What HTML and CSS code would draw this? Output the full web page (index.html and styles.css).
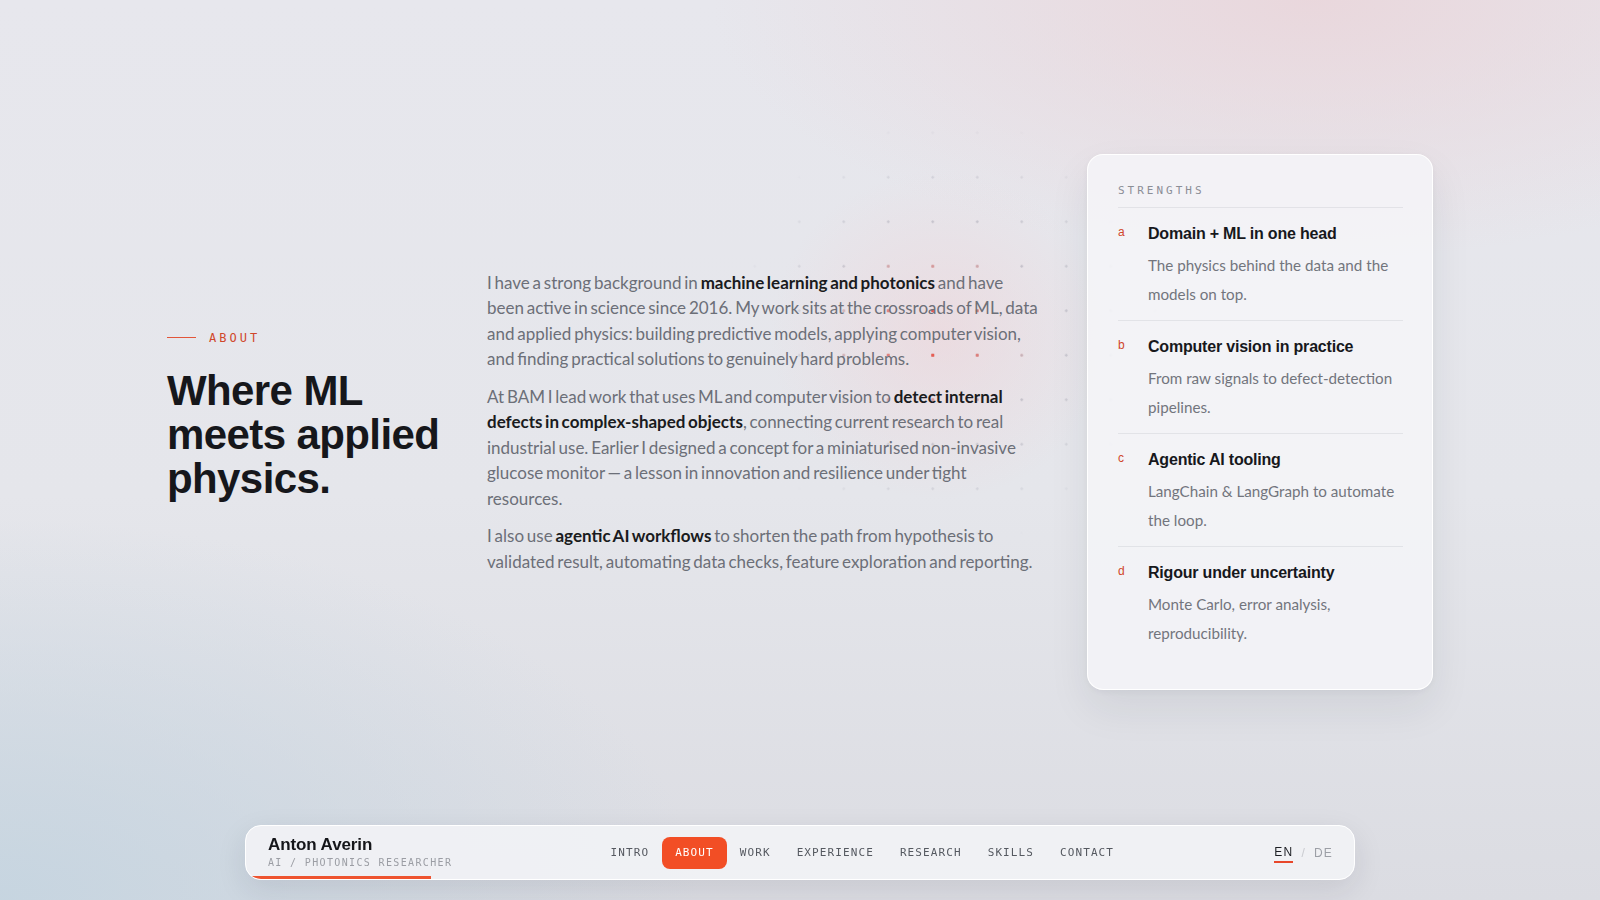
FILE: index.html
```html
<!DOCTYPE html>
<html lang="en">

<head>
    <meta charset="UTF-8">
    <meta name="viewport" content="width=device-width, initial-scale=1.0">
    <title>Anton Averin — About</title>

    <link rel="stylesheet" href="styles.css">
</head>

<body>
    <div class="glow"></div>
    <div class="dots"></div>

    <main class="about">
        <div class="about-grid">
            <div class="about-head">
                <p class="eyebrow"><span class="eyebrow-line"></span>ABOUT</p>
                <h1 class="title">Where ML meets applied physics.</h1>
            </div>

            <div class="about-text">
                <p>I have a strong background in <b>machine learning and photonics</b> and have been active in science since 2016. My work sits at the crossroads of ML, data and applied physics: building predictive models, applying computer vision, and finding practical solutions to genuinely hard problems.</p>
                <p>At BAM I lead work that uses ML and computer vision to <b>detect internal defects in complex-shaped objects</b>, connecting current research to real industrial use. Earlier I designed a concept for a miniaturised non-invasive glucose monitor — a lesson in innovation and resilience under tight resources.</p>
                <p>I also use <b>agentic AI workflows</b> to shorten the path from hypothesis to validated result, automating data checks, feature exploration and reporting.</p>
            </div>

            <aside class="card">
                <p class="card-label">STRENGTHS</p>
                <div class="item">
                    <span class="item-key">a</span>
                    <div>
                        <h3 class="item-title">Domain + ML in one head</h3>
                        <p class="item-desc">The physics behind the data and the models on top.</p>
                    </div>
                </div>
                <div class="item">
                    <span class="item-key">b</span>
                    <div>
                        <h3 class="item-title">Computer vision in practice</h3>
                        <p class="item-desc">From raw signals to defect-detection pipelines.</p>
                    </div>
                </div>
                <div class="item">
                    <span class="item-key">c</span>
                    <div>
                        <h3 class="item-title">Agentic AI tooling</h3>
                        <p class="item-desc">LangChain &amp; LangGraph to automate the loop.</p>
                    </div>
                </div>
                <div class="item">
                    <span class="item-key">d</span>
                    <div>
                        <h3 class="item-title">Rigour under uncertainty</h3>
                        <p class="item-desc">Monte Carlo, error analysis, reproducibility.</p>
                    </div>
                </div>
            </aside>
        </div>
    </main>

    <nav class="navbar">
        <div class="brand">
            <div class="brand-name">Anton Averin</div>
            <div class="brand-sub">AI / PHOTONICS RESEARCHER</div>
        </div>
        <div class="nav-links">
            <a class="nav-link">INTRO</a>
            <a class="nav-link active">ABOUT</a>
            <a class="nav-link">WORK</a>
            <a class="nav-link">EXPERIENCE</a>
            <a class="nav-link">RESEARCH</a>
            <a class="nav-link">SKILLS</a>
            <a class="nav-link">CONTACT</a>
        </div>
        <div class="lang">
            <span class="lang-item current">EN</span>
            <span class="lang-sep">/</span>
            <span class="lang-item">DE</span>
        </div>
        <div class="progress" style="width: 185px"></div>
    </nav>
</body>

</html>
```

FILE: styles.css
```css
* {
    margin: 0;
    padding: 0;
    box-sizing: border-box;
}

body {
    height: 900px;
    overflow: hidden;
    font-family: Lato, "Open Sans", sans-serif;
    color: #1b1c21;
    background-color: #e4e5eb;
    background-image:
        radial-gradient(ellipse 600px 260px at 82% 0%, rgba(234, 210, 215, 0.75), rgba(234, 210, 215, 0)),
        radial-gradient(ellipse 700px 380px at 0% 100%, rgba(196, 212, 224, 0.9), rgba(196, 212, 224, 0)),
        linear-gradient(180deg, #e7e7ed 0%, #e5e6eb 55%, #dbdce2 100%);
}

/* soft blob behind the text + dot field */
.glow {
    position: absolute;
    left: 770px;
    top: 170px;
    width: 340px;
    height: 330px;
    border-radius: 50%;
    background: radial-gradient(closest-side, rgba(242, 204, 208, 0.42), rgba(242, 204, 208, 0));
    pointer-events: none;
}

.dots {
    position: absolute;
    left: 688px;
    top: 66px;
    width: 490px;
    height: 490px;
    background-image: radial-gradient(circle, rgba(120, 122, 140, 0.5) 1px, transparent 1.5px);
    background-size: 44.5px 44.5px;
    -webkit-mask-image: radial-gradient(circle at 53% 54%, #000 0, rgba(0, 0, 0, 0.6) 110px, transparent 220px);
    mask-image: radial-gradient(circle at 53% 54%, #000 0, rgba(0, 0, 0, 0.6) 110px, transparent 220px);
    pointer-events: none;
}

.dots::after {
    content: "";
    position: absolute;
    inset: 0;
    background-image: radial-gradient(circle, rgba(232, 78, 66, 1) 1.4px, transparent 1.9px);
    background-size: 44.5px 44.5px;
    -webkit-mask-image: radial-gradient(circle at 49% 55%, #000 0, #000 30px, rgba(0, 0, 0, 0.55) 60px, transparent 110px);
    mask-image: radial-gradient(circle at 49% 55%, #000 0, #000 30px, rgba(0, 0, 0, 0.55) 60px, transparent 110px);
}

.about {
    position: relative;
    height: 844px;
    display: flex;
    align-items: center;
}

.about-grid {
    width: 1266px;
    margin: 0 auto;
    display: grid;
    grid-template-columns: 280px 560px 346px;
    column-gap: 40px;
    align-items: center;
}

.about-head {
    padding-bottom: 14px;
}

.eyebrow {
    display: flex;
    align-items: center;
    gap: 13px;
    font-family: "DejaVu Sans Mono", monospace;
    font-size: 12px;
    line-height: 16px;
    letter-spacing: 3px;
    color: #d0462a;
    margin-bottom: 23px;
}

.eyebrow-line {
    width: 29px;
    height: 1px;
    background: #e2553a;
}

.title {
    font-family: "Liberation Sans", Arial, sans-serif;
    font-weight: 700;
    font-size: 42px;
    line-height: 44px;
    letter-spacing: -0.6px;
    color: #16171b;
}

.about-text {
    max-width: 553.5px;
}

.about-text p {
    font-size: 17px;
    line-height: 25.5px;
    word-spacing: -1.555px;
    color: #6c6f78;
    margin-bottom: 12px;
}

.about-text p:last-child {
    margin-bottom: 0;
}

.about-text b {
    font-weight: 700;
    color: #1a1b20;
}

.card {
    padding: 29px 29px 30px 30px;
    border-radius: 16px;
    background: rgba(244, 245, 248, 0.86);
    border: 1px solid rgba(255, 255, 255, 0.95);
    box-shadow: 0 18px 40px rgba(30, 34, 50, 0.08), 0 2px 6px rgba(30, 34, 50, 0.04);
}

.card-label {
    font-family: "DejaVu Sans Mono", monospace;
    font-size: 11px;
    line-height: 14px;
    letter-spacing: 3px;
    color: #8b8e96;
    padding-bottom: 9px;
    border-bottom: 1px solid rgba(20, 24, 40, 0.07);
}

.item {
    display: grid;
    grid-template-columns: 30px 1fr;
    padding: 14px 0 11px;
    border-bottom: 1px solid rgba(20, 24, 40, 0.07);
}

.item:last-child {
    border-bottom: none;
}

.item-key {
    font-family: "Liberation Sans", Arial, sans-serif;
    font-size: 12px;
    line-height: 20px;
    color: #d0462a;
}

.item-title {
    font-family: "Liberation Sans", Arial, sans-serif;
    font-weight: 700;
    font-size: 16px;
    line-height: 24px;
    letter-spacing: -0.2px;
    color: #17181c;
    margin-bottom: 5px;
}

.item-desc {
    font-size: 15.2px;
    line-height: 29px;
    color: #72757d;
}

.navbar {
    position: fixed;
    left: 50%;
    bottom: 20px;
    transform: translateX(-50%);
    width: 1110px;
    height: 55px;
    padding: 0 21px 0 22px;
    display: flex;
    align-items: center;
    justify-content: space-between;
    overflow: hidden;
    border-radius: 16px;
    background: rgba(240, 241, 244, 0.95);
    border: 1.5px solid #fff;
    box-shadow: 0 10px 30px rgba(30, 34, 50, 0.1);
}

.brand-name {
    font-family: "Liberation Sans", Arial, sans-serif;
    font-weight: 700;
    font-size: 17px;
    line-height: 19px;
    letter-spacing: -0.1px;
    color: #15161a;
}

.brand-sub {
    margin-top: 2px;
    font-family: "DejaVu Sans Mono", monospace;
    font-size: 10px;
    line-height: 14px;
    letter-spacing: 1.35px;
    color: #9b9da4;
}

.nav-links {
    display: flex;
    align-items: center;
    margin-left: -2px;
}

.nav-link {
    font-family: "DejaVu Sans Mono", monospace;
    font-size: 11px;
    line-height: 14px;
    letter-spacing: 1.1px;
    color: #555960;
    padding: 9px 13px;
    border-radius: 8px;
}

.nav-link.active {
    background: #f24e25;
    color: #fff;
}

.lang {
    display: flex;
    align-items: center;
    gap: 8px;
    font-family: "Liberation Sans", Arial, sans-serif;
    font-size: 12px;
    letter-spacing: 1.2px;
}

.lang-item {
    color: #9c9fa6;
    padding: 2px 0;
}

.lang-item.current {
    color: #1d1f24;
    border-bottom: 2px solid #e8472a;
}

.lang-sep {
    color: #c9cbd0;
}

.progress {
    position: absolute;
    left: 0;
    bottom: 0;
    height: 3px;
    background: #ee5430;
}
```
